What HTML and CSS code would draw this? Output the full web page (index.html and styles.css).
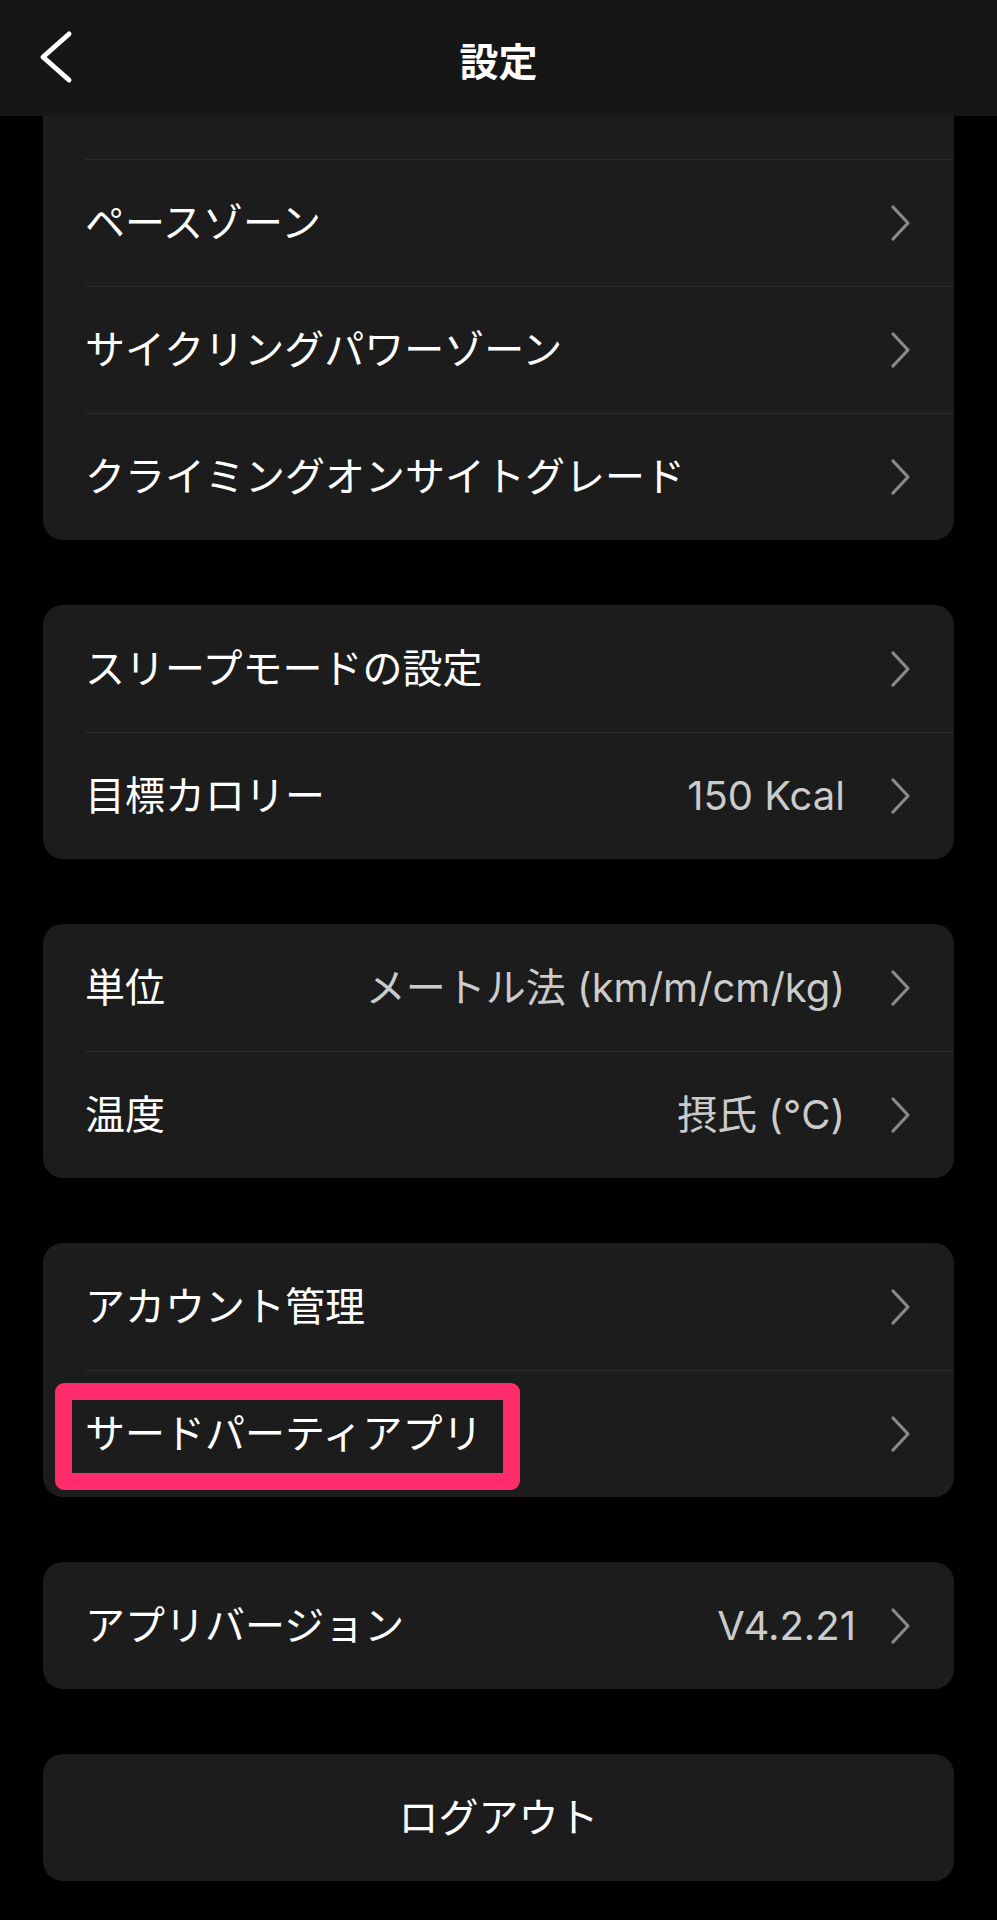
FILE: index.html
```html
<!DOCTYPE html>
<html lang="ja">
<head>
<meta charset="utf-8">
<title>設定</title>
<link rel="stylesheet" href="styles.css">
</head>
<body>
<header class="topbar">
  <div class="back">
    <svg class="back-icon" width="50" height="60" viewBox="0 0 50 60"><polyline points="39,6 13,29 39,52" fill="none" stroke="#ffffff" stroke-width="5" stroke-linecap="round" stroke-linejoin="round"/></svg>
  </div>
  <h1 class="title">設定</h1>
  <div class="spacer"></div>
</header>
<main class="content">
  <section class="card card-top">
    <div class="row row-partial"></div>
    <div class="row"><span class="label">ペースゾーン</span><span class="chev"><svg width="22" height="38" viewBox="0 0 22 38"><polyline points="4,3 19,19 4,35" fill="none" stroke="#8a8a8a" stroke-width="3.2" stroke-linecap="round" stroke-linejoin="round"/></svg></span></div>
    <div class="row"><span class="label">サイクリングパワーゾーン</span><span class="chev"><svg width="22" height="38" viewBox="0 0 22 38"><polyline points="4,3 19,19 4,35" fill="none" stroke="#8a8a8a" stroke-width="3.2" stroke-linecap="round" stroke-linejoin="round"/></svg></span></div>
    <div class="row"><span class="label">クライミングオンサイトグレード</span><span class="chev"><svg width="22" height="38" viewBox="0 0 22 38"><polyline points="4,3 19,19 4,35" fill="none" stroke="#8a8a8a" stroke-width="3.2" stroke-linecap="round" stroke-linejoin="round"/></svg></span></div>
  </section>

  <section class="card">
    <div class="row"><span class="label">スリープモードの設定</span><span class="chev"><svg width="22" height="38" viewBox="0 0 22 38"><polyline points="4,3 19,19 4,35" fill="none" stroke="#8a8a8a" stroke-width="3.2" stroke-linecap="round" stroke-linejoin="round"/></svg></span></div>
    <div class="row"><span class="label">目標カロリー</span><span class="value">150 Kcal</span><span class="chev"><svg width="22" height="38" viewBox="0 0 22 38"><polyline points="4,3 19,19 4,35" fill="none" stroke="#8a8a8a" stroke-width="3.2" stroke-linecap="round" stroke-linejoin="round"/></svg></span></div>
  </section>

  <section class="card">
    <div class="row"><span class="label">単位</span><span class="value">メートル法 (km/m/cm/kg)</span><span class="chev"><svg width="22" height="38" viewBox="0 0 22 38"><polyline points="4,3 19,19 4,35" fill="none" stroke="#8a8a8a" stroke-width="3.2" stroke-linecap="round" stroke-linejoin="round"/></svg></span></div>
    <div class="row"><span class="label">温度</span><span class="value">摂氏 (°C)</span><span class="chev"><svg width="22" height="38" viewBox="0 0 22 38"><polyline points="4,3 19,19 4,35" fill="none" stroke="#8a8a8a" stroke-width="3.2" stroke-linecap="round" stroke-linejoin="round"/></svg></span></div>
  </section>

  <section class="card">
    <div class="row"><span class="label">アカウント管理</span><span class="chev"><svg width="22" height="38" viewBox="0 0 22 38"><polyline points="4,3 19,19 4,35" fill="none" stroke="#8a8a8a" stroke-width="3.2" stroke-linecap="round" stroke-linejoin="round"/></svg></span></div>
    <div class="row row-marked"><span class="highlight"></span><span class="label">サードパーティアプリ</span><span class="chev"><svg width="22" height="38" viewBox="0 0 22 38"><polyline points="4,3 19,19 4,35" fill="none" stroke="#8a8a8a" stroke-width="3.2" stroke-linecap="round" stroke-linejoin="round"/></svg></span></div>
  </section>

  <section class="card">
    <div class="row"><span class="label">アプリバージョン</span><span class="value value-version">V4.2.21</span><span class="chev"><svg width="22" height="38" viewBox="0 0 22 38"><polyline points="4,3 19,19 4,35" fill="none" stroke="#8a8a8a" stroke-width="3.2" stroke-linecap="round" stroke-linejoin="round"/></svg></span></div>
  </section>

  <section class="card">
    <div class="row row-center"><span class="label">ログアウト</span></div>
  </section>
</main>
</body>
</html>
```

FILE: styles.css
```css
* {
  box-sizing: border-box;
}

html, body {
  margin: 0;
  padding: 0;
  background: #000000;
}

body {
  width: 997px;
  min-height: 1920px;
  font-family: "Inter", "Noto Sans CJK JP", sans-serif;
  color: #ffffff;
}

.topbar {
  height: 116px;
  background: #161616;
  display: grid;
  grid-template-columns: 1fr auto 1fr;
  align-items: center;
}

.back {
  padding-left: 30px;
  display: flex;
  align-items: center;
  height: 100%;
}

.back-icon {
  display: block;
}

.title {
  margin: 0;
  font-family: "Noto Sans CJK JP", sans-serif;
  font-size: 39px;
  font-weight: 700;
  line-height: 1;
  letter-spacing: 0;
  padding-top: 2px;
}

.content {
  display: flex;
  flex-direction: column;
  gap: 65px;
  padding: 0 43px;
}

.card {
  background: #1c1c1c;
  border-radius: 20px;
  overflow: hidden;
}

.card-top {
  border-top-left-radius: 0;
  border-top-right-radius: 0;
}

.row {
  position: relative;
  height: 127px;
  margin-left: 42px;
  padding-right: 43px;
  display: flex;
  align-items: center;
  border-top: 1px solid #2b2b2b;
}

.row:first-child {
  border-top: none;
}

.row-partial {
  height: 43px;
}

.label {
  flex: 1;
  font-size: 40px;
  line-height: 1;
  white-space: nowrap;
}

.value {
  font-size: 40px;
  line-height: 1;
  color: #cbcbcb;
  margin-right: 44px;
  white-space: nowrap;
}

.value-version {
  margin-right: 33px;
}

.chev {
  display: flex;
  align-items: center;
}

.chev svg {
  display: block;
}

.row-center {
  margin-left: 0;
  padding-right: 0;
  justify-content: center;
}

.row-center .label {
  flex: none;
}

.highlight {
  position: absolute;
  left: -30px;
  top: 12px;
  width: 465px;
  height: 107px;
  border: 17px solid #ff2d6e;
  border-radius: 9px;
  pointer-events: none;
}
```
